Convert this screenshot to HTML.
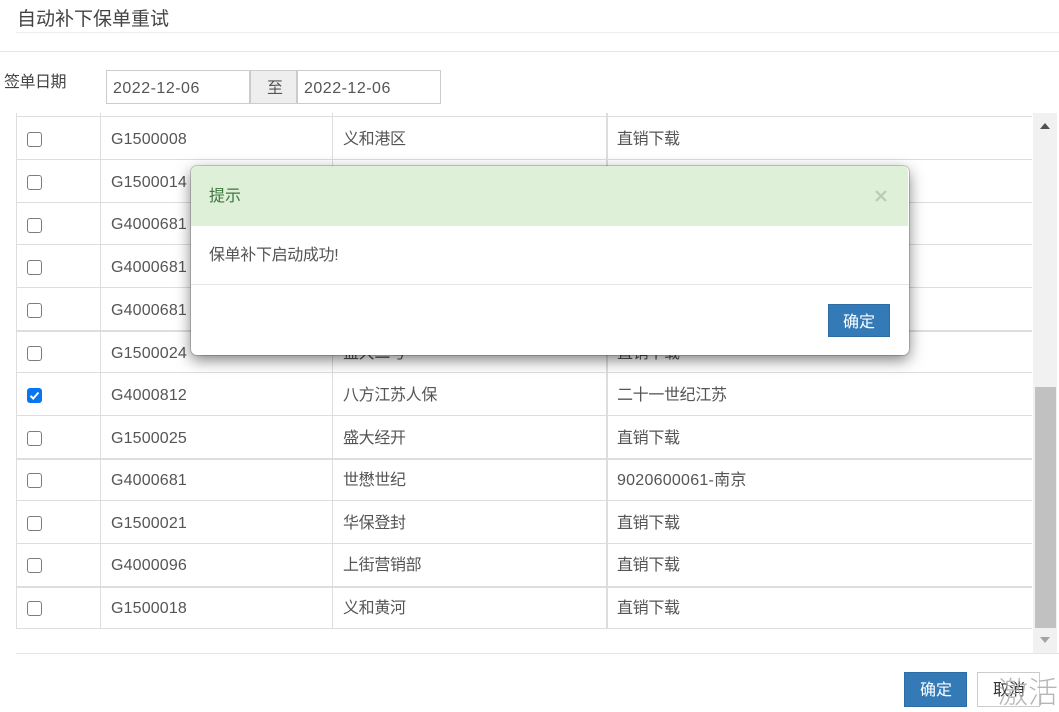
<!DOCTYPE html>
<html><head><meta charset="utf-8">
<style>
html,body{margin:0;padding:0;background:#fff}
body{width:1059px;height:707px;position:relative;overflow:hidden;font-family:"Liberation Sans","Noto Sans CJK SC",sans-serif;font-size:16px;color:#555}
.a{position:absolute}
.t{position:absolute;white-space:nowrap;line-height:22px;font-weight:400}
.r{margin-top:2px}
.c{letter-spacing:-.33px}
.h{position:absolute;left:16px;width:1016px;height:1px;background:#ddd}
.h.b{height:2px;background:#ddd}
.v{position:absolute;width:1px;background:#ddd;top:113px;height:516px}
.cb{position:absolute;left:27px;width:13px;height:13px;border:1px solid #767676;border-radius:3px;background:#fff;opacity:.95}
</style></head><body>
<div class="t" style="left:17px;top:8px;font-size:19px;line-height:24px;color:#444">自动补下保单重试</div>
<div class="a" style="left:16px;top:32px;width:1043px;height:1px;background:#eee"></div>
<div class="a" style="left:0;top:51px;width:1059px;height:1px;background:#e5e5e5"></div>
<div class="t" style="left:4px;top:72px;font-size:16px;letter-spacing:-.5px;color:#444">签单日期</div>
<div class="a" style="left:106px;top:70px;width:142px;height:32px;border:1px solid #ccc"></div>
<div class="a" style="left:250px;top:70px;width:45px;height:32px;border:1px solid #ccc;background:#eee"></div>
<div class="a" style="left:297px;top:70px;width:142px;height:32px;border:1px solid #ccc"></div>
<div class="t" style="left:113px;top:78px;letter-spacing:.5px">2022-12-06</div>
<div class="t" style="left:267px;top:78px">至</div>
<div class="t" style="left:304px;top:78px;letter-spacing:.5px">2022-12-06</div>

<div class="v" style="left:16px"></div>
<div class="v" style="left:100px"></div>
<div class="v" style="left:332px"></div>
<div class="v" style="left:606px;width:2px"></div>
<div class="h" style="top:116px"></div>
<div class="h" style="top:159px"></div>
<div class="h" style="top:202px"></div>
<div class="h" style="top:244px"></div>
<div class="h" style="top:287px"></div>
<div class="h b" style="top:330px"></div>
<div class="h" style="top:372px"></div>
<div class="h" style="top:415px"></div>
<div class="h b" style="top:458px"></div>
<div class="h" style="top:500px"></div>
<div class="h" style="top:543px"></div>
<div class="h b" style="top:586px"></div>
<div class="h" style="top:628px"></div>

<div class="cb" style="top:132px"></div>
<div class="cb" style="top:175px"></div>
<div class="cb" style="top:218px"></div>
<div class="cb" style="top:260px"></div>
<div class="cb" style="top:303px"></div>
<div class="cb" style="top:346px"></div>
<svg class="a" style="left:27px;top:388px" width="15" height="15" viewBox="0 0 15 15"><rect width="15" height="15" rx="3" fill="#0a75f0"/><path d="M3.5 7.8 L6.2 10.5 L11.5 4.5" fill="none" stroke="#fff" stroke-width="2"/></svg>
<div class="cb" style="top:431px"></div>
<div class="cb" style="top:473px"></div>
<div class="cb" style="top:516px"></div>
<div class="cb" style="top:558px"></div>
<div class="cb" style="top:601px"></div>

<div class="t r" style="left:111px;top:127px;letter-spacing:.15px">G1500008</div>
<div class="t r" style="left:111px;top:170px;letter-spacing:.15px">G1500014</div>
<div class="t r" style="left:111px;top:212px;letter-spacing:.15px">G4000681</div>
<div class="t r" style="left:111px;top:255px;letter-spacing:.15px">G4000681</div>
<div class="t r" style="left:111px;top:298px;letter-spacing:.15px">G4000681</div>
<div class="t r" style="left:111px;top:341px;letter-spacing:.15px">G1500024</div>
<div class="t r" style="left:111px;top:383px;letter-spacing:.15px">G4000812</div>
<div class="t r" style="left:111px;top:426px;letter-spacing:.15px">G1500025</div>
<div class="t r" style="left:111px;top:468px;letter-spacing:.15px">G4000681</div>
<div class="t r" style="left:111px;top:511px;letter-spacing:.15px">G1500021</div>
<div class="t r" style="left:111px;top:553px;letter-spacing:.15px">G4000096</div>
<div class="t r" style="left:111px;top:596px;letter-spacing:.15px">G1500018</div>

<div class="t r c" style="left:343px;top:127px">义和港区</div>
<div class="t r c" style="left:343px;top:341px">盛大二号</div>
<div class="t r c" style="left:343px;top:383px">八方江苏人保</div>
<div class="t r c" style="left:343px;top:426px">盛大经开</div>
<div class="t r c" style="left:343px;top:468px">世懋世纪</div>
<div class="t r c" style="left:343px;top:511px">华保登封</div>
<div class="t r c" style="left:343px;top:553px">上街营销部</div>
<div class="t r c" style="left:343px;top:596px">义和黄河</div>

<div class="t r c" style="left:617px;top:127px">直销下载</div>
<div class="t r c" style="left:617px;top:341px">直销下载</div>
<div class="t r c" style="left:617px;top:383px">二十一世纪江苏</div>
<div class="t r c" style="left:617px;top:426px">直销下载</div>
<div class="t r" style="left:617px;top:468px;letter-spacing:.25px">9020600061-南京</div>
<div class="t r c" style="left:617px;top:511px">直销下载</div>
<div class="t r c" style="left:617px;top:553px">直销下载</div>
<div class="t r c" style="left:617px;top:596px">直销下载</div>

<div class="a" style="left:1033px;top:113px;width:24px;height:540px;background:#f1f1f1"></div>
<div class="a" style="left:1035px;top:387px;width:21px;height:241px;background:#c1c1c1"></div>
<div class="a" style="left:1040px;top:123px;width:0;height:0;border-left:5.5px solid transparent;border-right:5.5px solid transparent;border-bottom:6px solid #505050"></div>
<div class="a" style="left:1040px;top:637px;width:0;height:0;border-left:5.5px solid transparent;border-right:5.5px solid transparent;border-top:6px solid #a3a3a3"></div>
<div class="a" style="left:16px;top:653px;width:1043px;height:1px;background:#e5e5e5"></div>

<div class="a" style="left:904px;top:672px;width:61px;height:33px;background:#337ab7;border:1px solid #2e6da4"></div>
<div class="t" style="left:920px;top:680px;font-size:16px;color:#fff">确定</div>
<div class="a" style="left:977px;top:672px;width:61px;height:33px;background:#fff;border:1px solid #ccc"></div>
<div class="t" style="left:993px;top:680px;font-size:16px;color:#333">取消</div>
<div class="t" style="left:998px;top:676px;font-size:30px;line-height:36px;color:#aaa;font-weight:300;opacity:.85">激活</div>

<div class="a" style="left:191px;top:166px;width:718px;height:189px;background:#fff;border-radius:6px;box-shadow:0 0 0 1px rgba(0,0,0,.18),0 5px 15px rgba(0,0,0,.5)">
  <div class="a" style="left:0;top:0;width:717px;height:60px;background:#dff0d8;border-radius:6px 6px 0 0"></div>
  <div class="t" style="left:18px;top:19px;font-size:16px;color:#3c763d;margin-top:1px">提示</div>
  <svg class="a" style="left:684px;top:24px" width="12" height="12" viewBox="0 0 12 12"><path d="M1 1 L11 11 M11 1 L1 11" stroke="#bcc9b8" stroke-width="2.2" fill="none"/></svg>
  <div class="t" style="left:18px;top:79px;font-size:16px;letter-spacing:-.35px;color:#555">保单补下启动成功!</div>
  <div class="a" style="left:0;top:118px;width:718px;height:1px;background:#e5e5e5"></div>
  <div class="a" style="left:637px;top:138px;width:60px;height:31px;background:#337ab7;border:1px solid #2e6da4"></div>
  <div class="t" style="left:652px;top:146px;font-size:16px;color:#fff">确定</div>
</div>
</body></html>
